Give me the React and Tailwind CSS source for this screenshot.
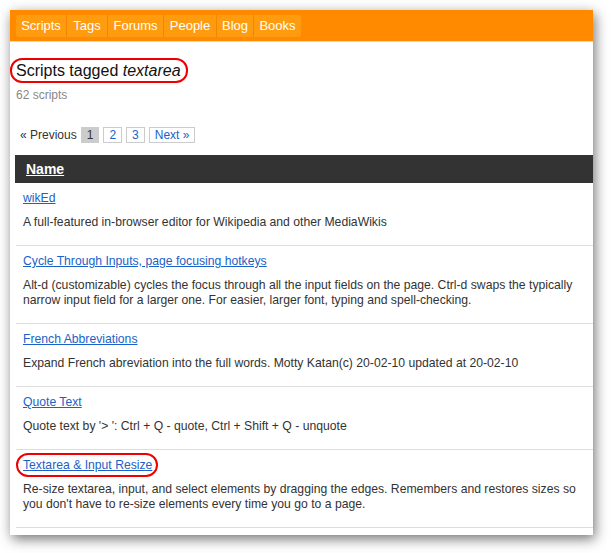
import React from 'react';

const navItems = [
  { label: 'Scripts', w: 'w-[51px]' },
  { label: 'Tags', w: 'w-[41px]' },
  { label: 'Forums', w: 'w-[56px]' },
  { label: 'People', w: 'w-[53px]' },
  { label: 'Blog', w: 'w-[37px]' },
  { label: 'Books', w: 'w-[47px]' },
];

const scripts = [
  {
    name: 'wikEd',
    desc: 'A full-featured in-browser editor for Wikipedia and other MediaWikis',
  },
  {
    name: 'Cycle Through Inputs, page focusing hotkeys',
    desc: 'Alt-d (customizable) cycles the focus through all the input fields on the page. Ctrl-d swaps the typically narrow input field for a larger one. For easier, larger font, typing and spell-checking.',
  },
  {
    name: 'French Abbreviations',
    desc: 'Expand French abreviation into the full words. Motty Katan(c) 20-02-10 updated at 20-02-10',
  },
  {
    name: 'Quote Text',
    desc: "Quote text by '> ': Ctrl + Q - quote, Ctrl + Shift + Q - unquote",
  },
  {
    name: 'Textarea & Input Resize',
    desc: "Re-size textarea, input, and select elements by dragging the edges. Remembers and restores sizes so you don't have to re-size elements every time you go to a page.",
    circled: true,
  },
];

const App = () => {
  return (
    <div className="min-h-screen bg-white p-[10px] font-['Liberation_Sans',Arial,sans-serif]">
      <div className="w-[583px] h-[525px] bg-white overflow-hidden shadow-[2px_4px_12px_rgba(0,0,0,0.55)]">
        {/* Top nav */}
        <div className="h-[32px] bg-[#ff8a00] border-b border-[#dddddd] pt-[5px] pl-[6px]">
          <ul className="flex h-[22px] w-fit rounded-[3px] overflow-hidden">
            {navItems.map((item) => (
              <li
                key={item.label}
                className={`${item.w} h-full flex items-center justify-center bg-[#ff9b0f] border-r border-[#f58400] last:border-r-0 text-white text-[13px]`}
              >
                {item.label}
              </li>
            ))}
          </ul>
        </div>

        {/* Heading */}
        <div className="mt-[16px]">
          <h1 className="inline-block border-2 border-[#ee0000] rounded-[12px] pl-[4px] pr-[5px] text-[16px] leading-[21px] text-[#111]">
            Scripts tagged <em>textarea</em>
          </h1>
        </div>
        <p className="mt-[5px] ml-[6px] text-[12px] leading-[15px] text-[#888]">62 scripts</p>

        {/* Pagination */}
        <div className="mt-[24px] ml-[10px] flex items-center gap-[4px] text-[12px] leading-[14px]">
          <span className="text-[#333]">« Previous</span>
          <span className="px-[5px] border border-[#cccccc] bg-[#cccccc] text-[#333]">1</span>
          <a href="#" className="px-[5px] border border-[#cccccc] text-[#1a62c7]">2</a>
          <a href="#" className="px-[5px] border border-[#cccccc] text-[#1a62c7]">3</a>
          <a href="#" className="px-[5px] border border-[#cccccc] text-[#1a62c7]">Next »</a>
        </div>

        {/* Table */}
        <div className="mt-[12px] ml-[5px]">
          <div className="h-[28px] bg-[#333333] pl-[11px] flex items-center">
            <a href="#" className="text-white font-bold text-[14px] underline">Name</a>
          </div>
          {scripts.map((s) => (
            <div key={s.name} className="ml-[1px] border-b border-[#dddddd] pl-[7px] pr-[10px] pt-[8px] pb-[15px]">
              <div className="h-[15px] text-[12.2px] leading-[15px]">
                <a href="#" className="relative text-[#1a62c7] underline">
                  {s.name}
                  {s.circled && (
                    <span className="absolute -left-[7px] -right-[6px] -top-[5px] -bottom-[5px] border-2 border-[#ee0000] rounded-[12px]" />
                  )}
                </a>
              </div>
              <p className="mt-[9px] text-[12.2px] leading-[15px] text-[#333]">{s.desc}</p>
            </div>
          ))}
        </div>
      </div>
    </div>
  );
};

export default App;
